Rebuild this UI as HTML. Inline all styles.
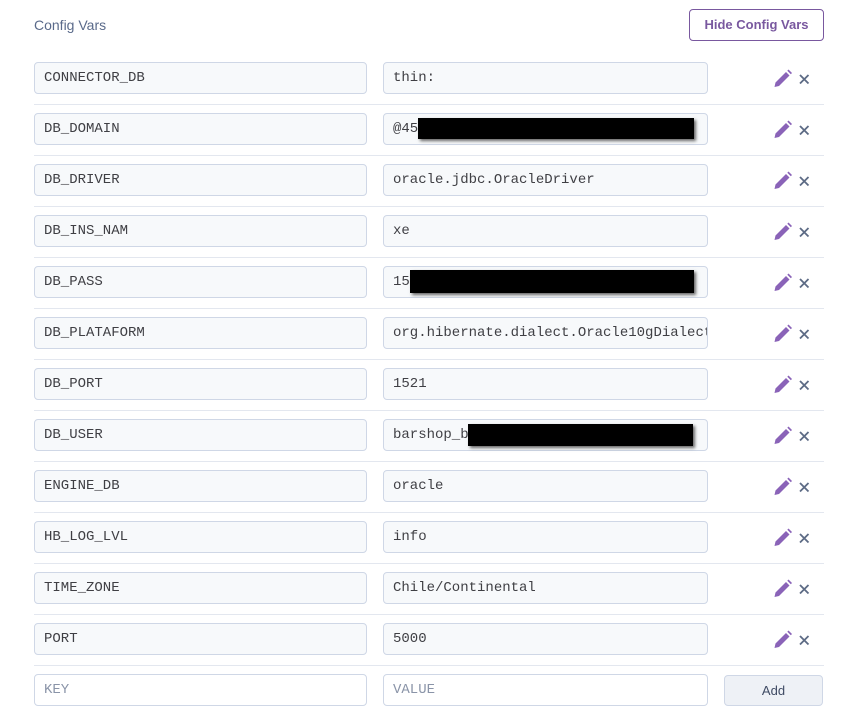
<!DOCTYPE html>
<html><head><style>
body{margin:0;background:#fff;width:851px;height:726px;position:relative;overflow:hidden;font-family:"Liberation Sans",sans-serif}
.t{position:absolute;left:34px;top:17px;font-size:14px;color:#5a6a8a}
.hb{position:absolute;left:689px;top:9px;width:133px;height:30px;border:1px solid #79589f;border-radius:4px;color:#79589f;font-weight:bold;font-size:13px;text-align:center;line-height:30px}
.in{position:absolute;height:32px;border:1px solid #cfd7e6;border-radius:4px;background:#f7f9fb;font-family:"Liberation Mono",monospace;font-size:14px;color:#3f3f44;line-height:31px;padding-left:9px;box-sizing:border-box;overflow:hidden;white-space:nowrap}
.k{left:34px;width:333px}.v{left:383px;width:325px}
.sep{position:absolute;left:34px;width:790px;height:1px;background:#e3e7ef}
.ic{position:absolute;left:773px}
.red{position:absolute;background:#000;box-shadow:2px 2px 3px #666}
.add{position:absolute;left:724px;top:675px;width:99px;height:31px;border:1px solid #cfd7e6;border-radius:4px;background:#eef1f6;color:#3f4b64;font-size:13px;text-align:center;line-height:30px;box-sizing:border-box}
.ph{color:#8a94a8;background:#fff}
</style></head><body>
<div class="t">Config Vars</div>
<div class="hb">Hide Config Vars</div>
<div id="rows"></div>
<script>
var r=[["CONNECTOR_DB","thin:"],["DB_DOMAIN","@45"],["DB_DRIVER","oracle.jdbc.OracleDriver"],["DB_INS_NAM","xe"],["DB_PASS","15"],["DB_PLATAFORM","org.hibernate.dialect.Oracle10gDialect"],["DB_PORT","1521"],["DB_USER","barshop_b"],["ENGINE_DB","oracle"],["HB_LOG_LVL","info"],["TIME_ZONE","Chile/Continental"],["PORT","5000"]];
var h="";
r.forEach(function(e,i){var y=62+i*51;
h+='<div class="in k" style="top:'+y+'px">'+e[0]+'</div><div class="in v" style="top:'+y+'px">'+e[1]+'</div>';
h+='<svg class="ic" style="top:'+(y+7)+'px" width="40" height="20" viewBox="0 0 40 20"><path d="M1.5 18 L2.5 13.5 L13 3 L16.5 6.5 L6 17 Z" fill="#8a63b8"/><path d="M14.3 1.7 L15.5 0.5 L19 4 L17.8 5.2 Z" fill="#8a63b8"/><path d="M27 6 L35.5 14.5 M35.5 6 L27 14.5" stroke="#5d6b85" stroke-width="1.8"/></svg>';
h+='<div class="sep" style="top:'+(y+42)+'px"></div>';});
h+='<div class="red" style="left:418px;top:118px;width:276px;height:21px"></div>';
h+='<div class="red" style="left:410px;top:270px;width:284px;height:23px"></div>';
h+='<div class="red" style="left:468px;top:424px;width:225px;height:22px"></div>';
h+='<div class="in k ph" style="top:674px">KEY</div><div class="in v ph" style="top:674px">VALUE</div>';
document.getElementById("rows").innerHTML=h;
</script>
<div class="add">Add</div>
</body></html>
